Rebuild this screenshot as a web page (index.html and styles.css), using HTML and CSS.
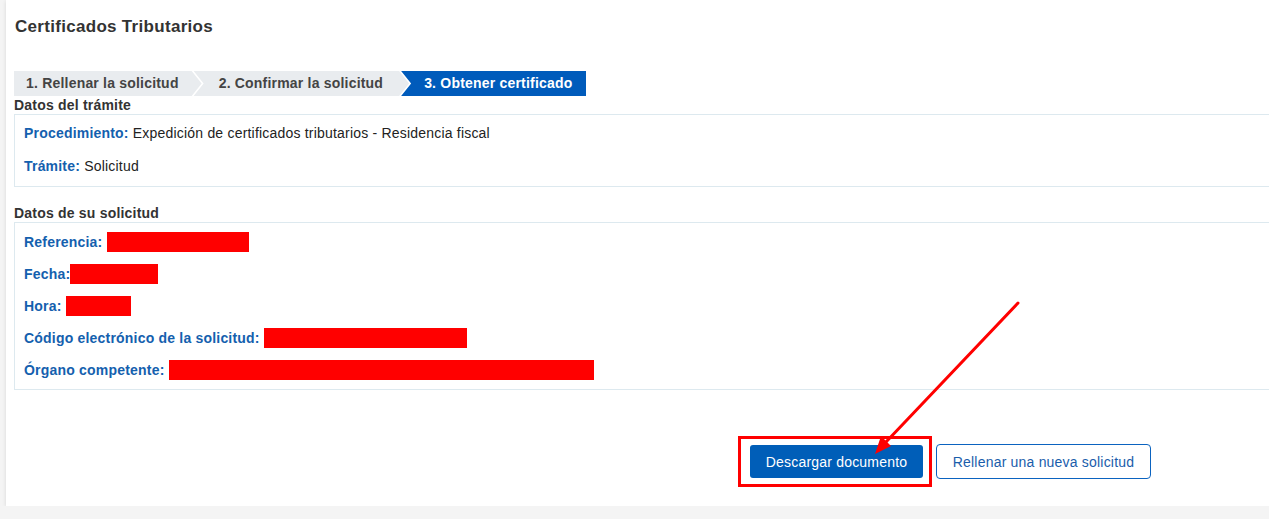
FILE: index.html
```html
<!DOCTYPE html>
<html lang="es">
<head>
    <meta charset="UTF-8">
    <title>Certificados Tributarios</title>
    <link rel="stylesheet" href="styles.css">
</head>
<body>
    <div class="page">
        <div class="panel">
            <h1 class="title">Certificados Tributarios</h1>

            <ul class="steps">
                <li class="step first">1. Rellenar la solicitud</li>
                <li class="step">2. Confirmar la solicitud</li>
                <li class="step last current">3. Obtener certificado</li>
            </ul>

            <h2 class="section-title">Datos del trámite</h2>
            <div class="box box-tramite">
                <p class="row"><span class="label">Procedimiento:</span> Expedición de certificados tributarios - Residencia fiscal</p>
                <p class="row"><span class="label">Trámite:</span> Solicitud</p>
            </div>

            <h2 class="section-title spaced">Datos de su solicitud</h2>
            <div class="box box-solicitud">
                <p class="row"><span class="label">Referencia:</span> <span class="hidden-value w-ref"></span></p>
                <p class="row"><span class="label">Fecha:</span><span class="hidden-value w-fecha"></span></p>
                <p class="row"><span class="label">Hora:</span> <span class="hidden-value w-hora"></span></p>
                <p class="row"><span class="label">Código electrónico de la solicitud:</span> <span class="hidden-value w-codigo"></span></p>
                <p class="row"><span class="label">Órgano competente:</span> <span class="hidden-value w-organo"></span></p>
            </div>

            <div class="actions">
                <div class="highlight">
                    <button class="btn btn-primary">Descargar documento</button>
                </div>
                <button class="btn btn-outline">Rellenar una nueva solicitud</button>
            </div>
        </div>

        <!-- flecha roja que señala el botón de descarga -->
        <svg class="pointer" width="1269" height="519" viewBox="0 0 1269 519">
            <line x1="1018" y1="303" x2="886" y2="442" stroke="#ff0000" stroke-width="3" stroke-linecap="round"/>
            <polygon points="875,454 891,446 881,436" fill="#ff0000"/>
        </svg>
    </div>
</body>
</html>
```

FILE: styles.css
```css
*{
    padding:0;
    margin:0;
    box-sizing:border-box;
}
html,body{
    overflow:hidden;
}
body{
    background:#f4f4f4;
    font-family:"Liberation Sans", Arial, sans-serif;
    letter-spacing:0.2px;
    color:#222;
}
li{
    list-style:none;
}
.page{
    position:relative;
    padding-left:6px;
}
.panel{
    width:1300px;
    background:#fff;
    padding:17px 8px 19px 8px;
    box-shadow:0 1px 4px rgba(0,0,0,.12);
}
.title{
    font-size:17px;
    line-height:20px;
    font-weight:bold;
    letter-spacing:0.3px;
    color:#333;
    padding-left:1px;
}

/* pasos del asistente */
.steps{
    display:flex;
    margin-top:34px;
    height:25px;
}
.step{
    height:25px;
    line-height:25px;
    font-size:14px;
    font-weight:bold;
    color:#444;
    background:#e9ecef;
    padding:0 26px 0 25px;
    margin-left:-8px;
    clip-path:polygon(0 0, calc(100% - 10px) 0, 100% 50%, calc(100% - 10px) 100%, 0 100%, 10px 50%);
}
.step.first{
    margin-left:0;
    padding:0 23px 0 12px;
    clip-path:polygon(0 0, calc(100% - 10px) 0, 100% 50%, calc(100% - 10px) 100%, 0 100%);
}
.step.last{
    padding:0 14px 0 23px;
    clip-path:polygon(0 0, 100% 0, 100% 100%, 0 100%, 10px 50%);
}
.step.current{
    background:#005bbb;
    color:#fff;
}

/* bloques de datos */
.section-title{
    font-size:14px;
    line-height:18px;
    font-weight:bold;
    color:#333;
}
.section-title.spaced{
    margin-top:17px;
}
.box{
    border:1px solid #dde9ef;
    font-size:14px;
}
.box-tramite{
    padding:8px 9px 10px;
}
.box-tramite .row{
    line-height:20px;
}
.box-tramite .row + .row{
    margin-top:13px;
}
.box-solicitud{
    padding:3px 9px;
}
.box-solicitud .row{
    height:32px;
    padding:6px 0;
    line-height:20px;
}
.label{
    font-weight:bold;
    color:#1460ae;
}
.hidden-value{
    display:inline-block;
    height:20px;
    vertical-align:top;
    background:#ff0000;
}
.w-ref{ width:142px; }
.w-fecha{ width:88px; }
.w-hora{ width:65px; }
.w-codigo{ width:203px; }
.w-organo{ width:425px; }

/* botones */
.actions{
    display:flex;
    justify-content:flex-end;
    align-items:center;
    gap:4px;
    margin-top:46px;
    padding-right:147px;
}
.highlight{
    border:3px solid #ff0000;
    padding:6px 6px 6px 9px;
}
.btn{
    font-family:"Liberation Sans", Arial, sans-serif;
    font-size:14px;
    letter-spacing:0.2px;
    cursor:pointer;
}
.btn-primary{
    display:block;
    width:173px;
    height:33px;
    background:#005eb8;
    color:#fff;
    border:0;
    border-radius:3px;
}
.btn-outline{
    width:215px;
    height:35px;
    background:#fff;
    color:#1a5dab;
    border:1px solid #0b63c0;
    border-radius:4px;
}
.pointer{
    position:absolute;
    left:0;
    top:0;
    pointer-events:none;
}
```
